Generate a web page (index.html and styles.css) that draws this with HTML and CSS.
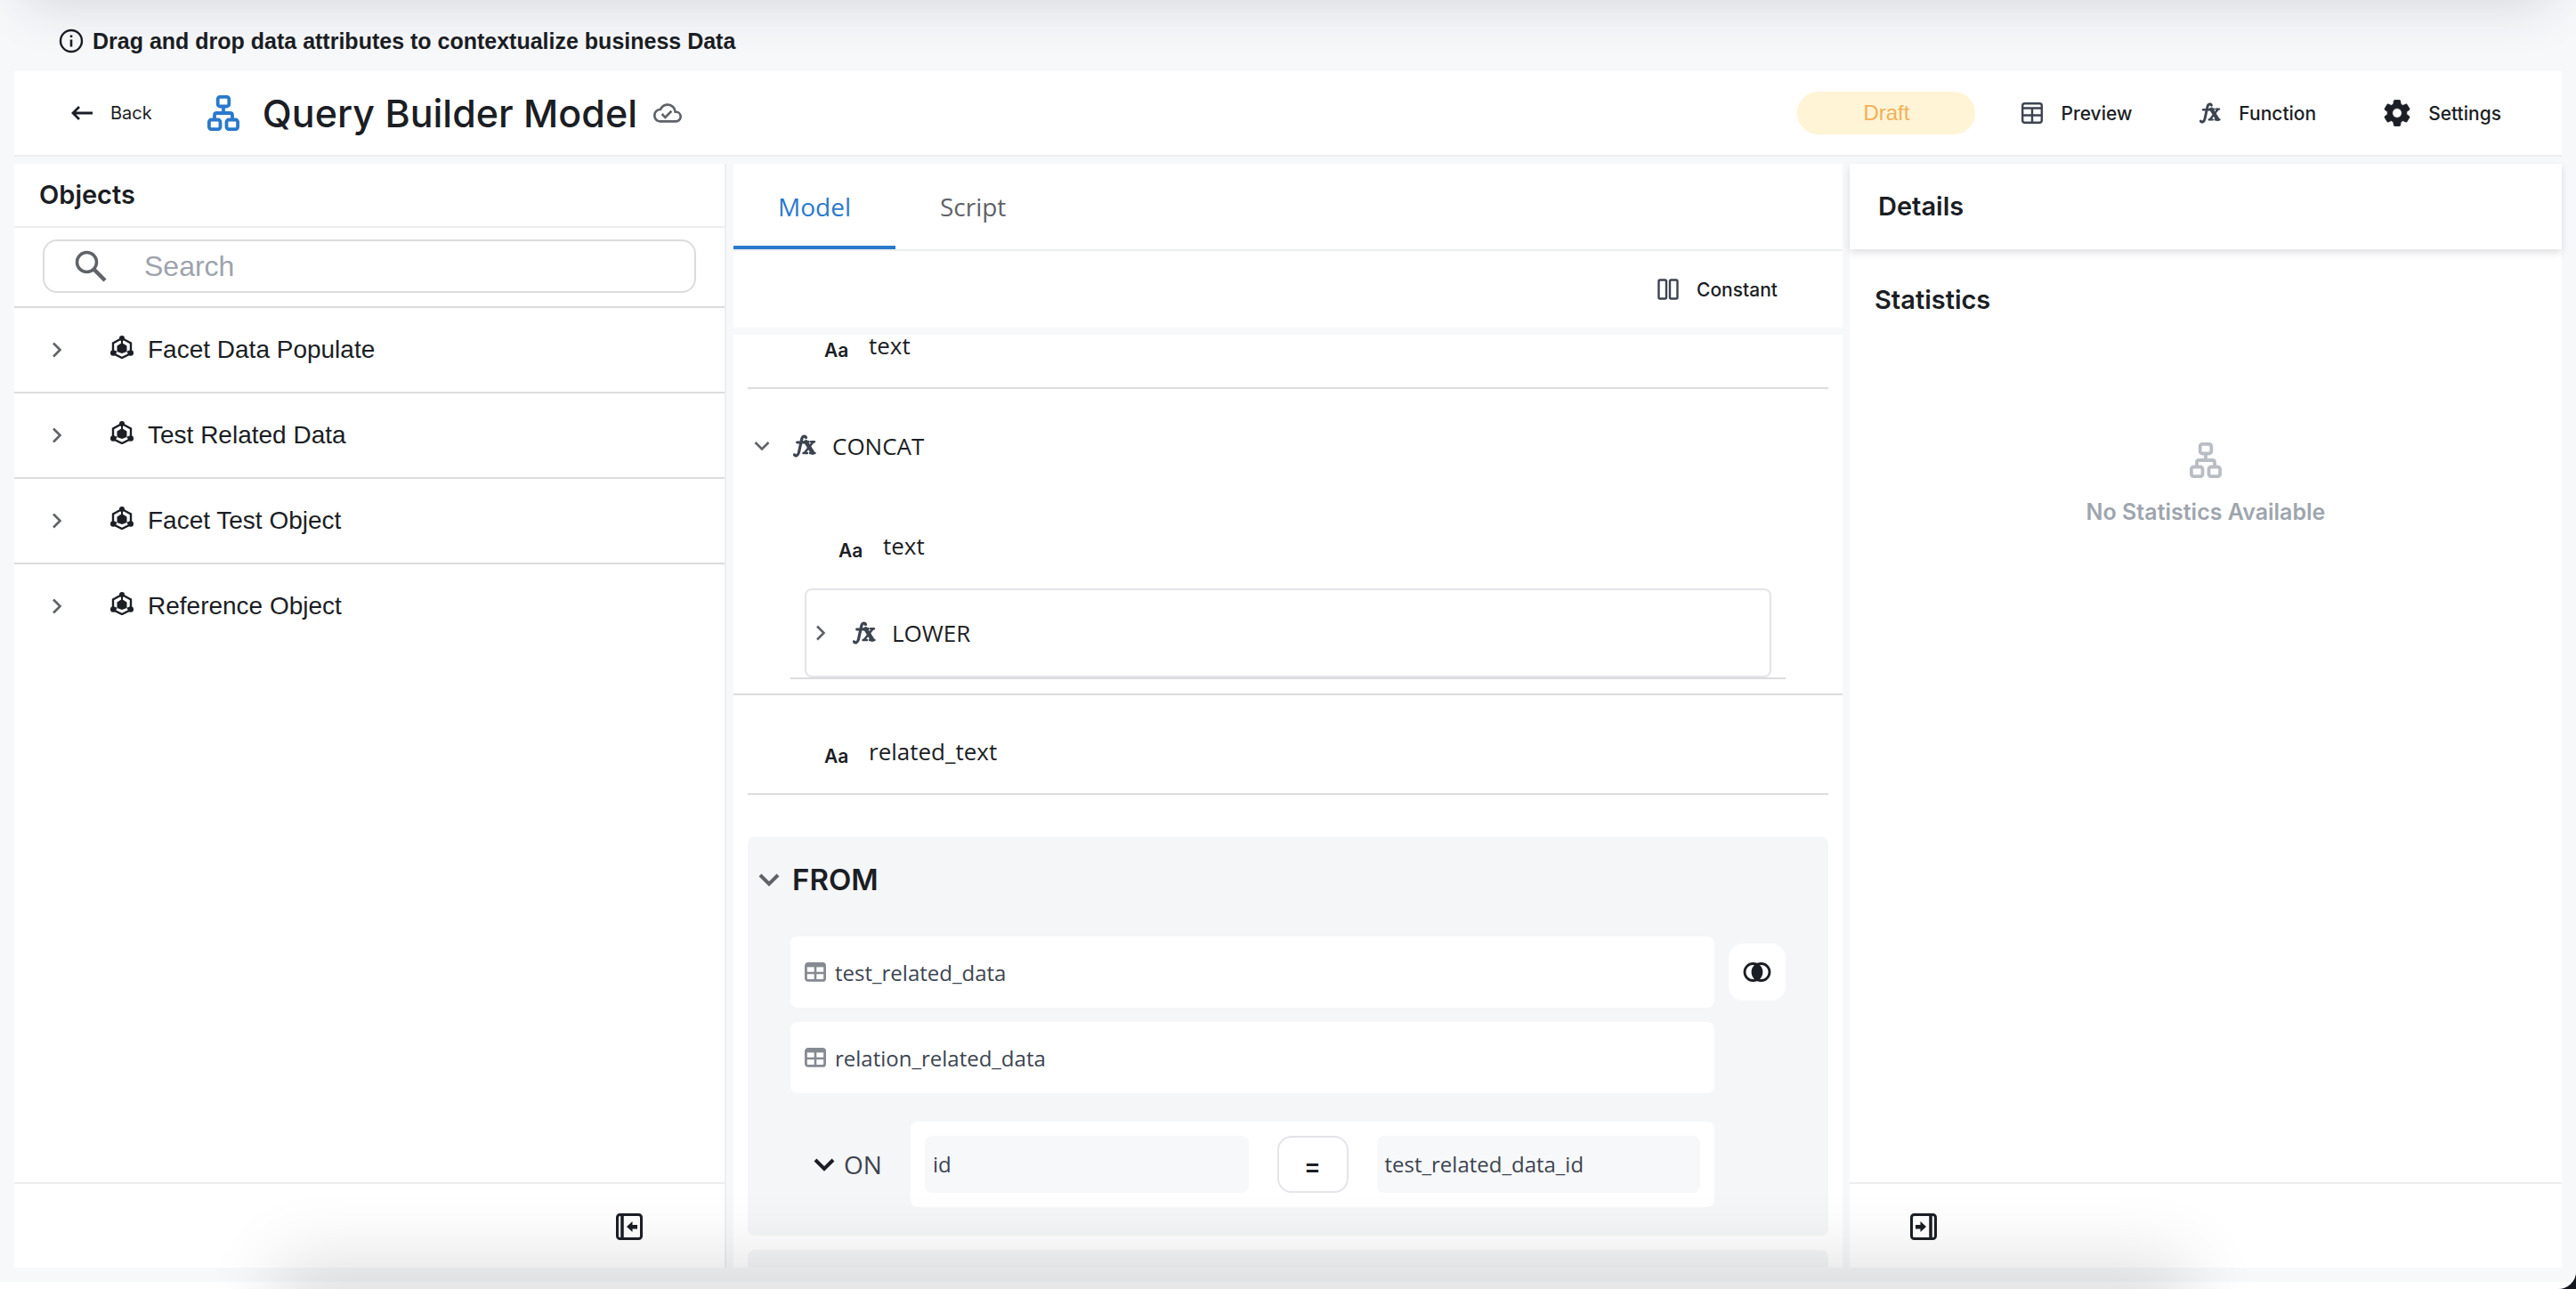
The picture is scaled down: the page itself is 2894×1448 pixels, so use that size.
FILE: index.html
```
<!DOCTYPE html>
<html lang="en">
<head>
    <meta charset="UTF-8">
    <meta name="viewport" content="width=device-width, initial-scale=1.0">
    <title>Query Builder Model</title>
    <link rel="stylesheet" href="styles.css">
</head>
<body>
    <!-- Icon sprite -->
    <svg class="sprite" aria-hidden="true">
        <symbol id="icon-info" viewBox="0 0 28 28">
            <circle cx="14" cy="14" r="12" fill="none" stroke="currentColor" stroke-width="2.4"/>
            <path d="M14 12.5v8M14 7.5v2.6" fill="none" stroke="currentColor" stroke-width="2.6"/>
        </symbol>
        <symbol id="icon-back" viewBox="0 0 24 16">
            <path d="M24 8H2M9 1L2 8l7 7" fill="none" stroke="currentColor" stroke-width="2.8"/>
        </symbol>
        <symbol id="icon-model" viewBox="0 0 36 40">
            <g fill="none" stroke="currentColor" stroke-width="3.8">
                <rect x="11.7" y="1.9" width="12.6" height="10.6" rx="2.5"/>
                <rect x="1.9" y="27.5" width="12.6" height="10.6" rx="2.5"/>
                <rect x="21.5" y="27.5" width="12.6" height="10.6" rx="2.5"/>
                <path d="M18 12v8M8 27v-4.500q0-2.500 2.500-2.500h15q2.500 0 2.500 2.500V27"/>
            </g>
        </symbol>
        <symbol id="icon-cloud" viewBox="0 0 24 24">
            <path d="M19.350 10.040A7.490 7.490 0 0 0 12 4C9.110 4 6.600 5.640 5.350 8.040A5.994 5.994 0 0 0 0 14c0 3.310 2.690 6 6 6h13c2.760 0 5-2.240 5-5 0-2.640-2.050-4.780-4.650-4.960zM19 18H6c-2.210 0-4-1.790-4-4 0-2.050 1.530-3.760 3.560-3.970l1.070-.11.5-.95A5.469 5.469 0 0 1 12 6c2.620 0 4.880 1.860 5.390 4.430l.3 1.500 1.530.11A2.980 2.980 0 0 1 22 15c0 1.650-1.350 3-3 3zm-9-3.820l-2.090-2.090L6.500 13.500 10 17l6.010-6.010-1.410-1.410z" fill="currentColor"/>
        </symbol>
        <symbol id="icon-preview" viewBox="0 0 24 24">
            <g fill="none" stroke="currentColor" stroke-width="2.4">
                <rect x="1.2" y="1.2" width="21.6" height="21.6" rx="2.5"/>
                <path d="M1 6.500h22M1 14.500h22M12 6.500v16.500" />
            </g>
        </symbol>
        <symbol id="icon-function" viewBox="0 0 26 26">
            <g fill="none" stroke="currentColor" stroke-linecap="round">
                <path d="M14.500 3.500c-.5-2-3.800-2.200-4.700 1.500L6.500 20c-.8 4-4 5-5 2.800" stroke-width="3.2"/>
                <path d="M4.500 9h8.500" stroke-width="2.8"/>
                <path d="M14.500 8.500l7.500 12" stroke-width="4.6"/>
                <path d="M22.500 8.500l-9.500 12" stroke-width="2.6"/>
                <path d="M12.500 8.200h5M20 8.200h4M11.500 21h4.500M19 21h5.500" stroke-width="2.4"/>
            </g>
        </symbol>
        <symbol id="icon-gear" viewBox="2 2 20 20">
            <path d="M19.140 12.940c.04-.3.06-.61.06-.94 0-.32-.02-.64-.07-.94l2.030-1.580a.49.49 0 0 0 .12-.61l-1.920-3.320a.488.488 0 0 0-.59-.22l-2.390.96c-.5-.38-1.030-.7-1.620-.94l-.36-2.540a.484.484 0 0 0-.48-.41h-3.840c-.24 0-.43.17-.47.41l-.36 2.540c-.59.24-1.130.57-1.620.94l-2.390-.96c-.22-.08-.47 0-.59.22L2.740 8.870c-.12.21-.08.47.12.61l2.030 1.580c-.05.3-.09.63-.09.94s.02.64.07.94l-2.030 1.580a.49.49 0 0 0-.12.61l1.920 3.320c.12.22.37.29.59.22l2.390-.96c.5.38 1.030.7 1.620.94l.36 2.540c.05.24.24.41.48.41h3.840c.24 0 .44-.17.47-.41l.36-2.540c.59-.24 1.130-.56 1.620-.94l2.390.96c.22.08.47 0 .59-.22l1.920-3.320c.12-.22.07-.47-.12-.61l-2.010-1.580zM12 15.600c-1.980 0-3.600-1.620-3.600-3.600s1.620-3.600 3.600-3.600 3.600 1.620 3.600 3.600-1.620 3.600-3.600 3.600z" fill="currentColor" stroke="currentColor" stroke-width=".6"/>
        </symbol>
        <symbol id="icon-search" viewBox="0 0 36 36">
            <circle cx="13.500" cy="13.500" r="11" fill="none" stroke="currentColor" stroke-width="3.500"/>
            <path d="M21.500 21.500l12.500 12.500" fill="none" stroke="currentColor" stroke-width="4.500"/>
        </symbol>
        <symbol id="icon-right" viewBox="0 0 12 18">
            <path d="M2 1.500l7.500 7.500L2 16.500" fill="none" stroke="currentColor" stroke-width="2.6"/>
        </symbol>
        <symbol id="icon-down" viewBox="0 0 24 16">
            <path d="M2 3l10 10L22 3" fill="none" stroke="currentColor" stroke-width="4"/>
        </symbol>
        <symbol id="icon-down-thin" viewBox="0 0 18 12">
            <path d="M1.500 2L9 9.500 16.500 2" fill="none" stroke="currentColor" stroke-width="2.6"/>
        </symbol>
        <symbol id="icon-object" viewBox="0 0 26 26">
            <path d="M13 3L3 8.500v11.500l10 5 10-5V8.500z" fill="none" stroke="currentColor" stroke-width="2.4"/>
            <path d="M13 8l5.500 3.500v6.500L13 20l-5.500-2v-6.500z" fill="currentColor"/>
            <path d="M13 3v8M7 18l-4 2M19 18l4 2" stroke="currentColor" stroke-width="2"/>
            <circle cx="13" cy="3" r="3" fill="currentColor"/>
            <circle cx="3.200" cy="19.500" r="3.200" fill="currentColor"/>
            <circle cx="22.800" cy="19.500" r="3.200" fill="currentColor"/>
        </symbol>
        <symbol id="icon-collapse" viewBox="0 0 30 30">
            <rect x="1.500" y="1.500" width="27" height="27" rx="3" fill="none" stroke="currentColor" stroke-width="3"/>
            <path d="M7 1v28" stroke="currentColor" stroke-width="3.500"/>
            <path d="M12 15l6.500-6v4H24v4.500h-5.500V21z" fill="currentColor"/>
        </symbol>
        <symbol id="icon-expand" viewBox="0 0 30 30">
            <rect x="1.500" y="1.500" width="27" height="27" rx="3" fill="none" stroke="currentColor" stroke-width="3"/>
            <path d="M23 1v28" stroke="currentColor" stroke-width="3.500"/>
            <path d="M18 15l-6.500-6v4H6v4.500h5.500V21z" fill="currentColor"/>
        </symbol>
        <symbol id="icon-constant" viewBox="0 0 24 24">
            <g fill="none" stroke="currentColor" stroke-width="2.4">
                <rect x="1.500" y="1.500" width="8.500" height="21" rx="1.500"/>
                <rect x="14" y="1.500" width="8.500" height="21" rx="1.500"/>
            </g>
        </symbol>
        <symbol id="icon-table" viewBox="0 0 24 22">
            <rect x="1.400" y="1.400" width="21.200" height="19" rx="2.500" fill="none" stroke="currentColor" stroke-width="2.8"/>
            <path d="M1 3.200h22" stroke="currentColor" stroke-width="4.400"/>
            <path d="M1 12h22M12 3v17" stroke="currentColor" stroke-width="2.6"/>
        </symbol>
        <symbol id="icon-join" viewBox="0 0 32 24">
            <path d="M16 3.500a10 10 0 0 1 0 17 10 10 0 0 1 0-17z" fill="currentColor"/>
            <circle cx="11.500" cy="12" r="9.500" fill="none" stroke="currentColor" stroke-width="2.8"/>
            <circle cx="20.500" cy="12" r="9.500" fill="none" stroke="currentColor" stroke-width="2.8"/>
        </symbol>
    </svg>

    <div class="window">
        <div class="app">
            <div class="notice">
                <svg class="notice-icon"><use href="#icon-info"/></svg>
                Drag and drop data attributes to contextualize business Data
            </div>

            <header class="header">
                <button class="btn back"><svg class="i-back"><use href="#icon-back"/></svg>Back</button>
                <svg class="i-model"><use href="#icon-model"/></svg>
                <h1>Query Builder Model</h1>
                <svg class="i-cloud"><use href="#icon-cloud"/></svg>
                <div class="actions">
                    <span class="badge">Draft</span>
                    <button class="btn"><svg class="i-24"><use href="#icon-preview"/></svg>Preview</button>
                    <button class="btn"><svg class="i-24"><use href="#icon-function"/></svg>Function</button>
                    <button class="btn settings"><svg class="i-30"><use href="#icon-gear"/></svg>Settings</button>
                </div>
            </header>

            <main class="columns">
                <!-- Objects -->
                <aside class="panel objects">
                    <h2>Objects</h2>
                    <div class="search-wrap">
                        <label class="search">
                            <svg class="i-search"><use href="#icon-search"/></svg>
                            <input type="text" placeholder="Search" aria-label="Search">
                        </label>
                    </div>
                    <ul class="object-list">
                        <li><svg class="i-right"><use href="#icon-right"/></svg><svg class="i-object"><use href="#icon-object"/></svg>Facet Data Populate</li>
                        <li><svg class="i-right"><use href="#icon-right"/></svg><svg class="i-object"><use href="#icon-object"/></svg>Test Related Data</li>
                        <li><svg class="i-right"><use href="#icon-right"/></svg><svg class="i-object"><use href="#icon-object"/></svg>Facet Test Object</li>
                        <li><svg class="i-right"><use href="#icon-right"/></svg><svg class="i-object"><use href="#icon-object"/></svg>Reference Object</li>
                    </ul>
                    <div class="panel-footer end">
                        <button class="toggle" aria-label="Collapse objects"><svg class="i-30"><use href="#icon-collapse"/></svg></button>
                    </div>
                </aside>

                <!-- Model -->
                <section class="center">
                    <div class="panel">
                        <nav class="tabs">
                            <button class="tab active">Model</button>
                            <button class="tab">Script</button>
                        </nav>
                        <div class="toolbar">
                            <button class="btn"><svg class="i-24"><use href="#icon-constant"/></svg>Constant</button>
                        </div>
                    </div>

                    <div class="panel model">
                        <div class="model-content">
                            <div class="attr"><span class="type">Aa</span>text</div>

                            <div class="fn">
                                <div class="fn-head">
                                    <svg class="i-down-thin"><use href="#icon-down-thin"/></svg>
                                    <svg class="i-fx"><use href="#icon-function"/></svg>CONCAT
                                </div>
                                <div class="fn-body">
                                    <div class="arg"><span class="type">Aa</span>text</div>
                                    <div class="fn-box">
                                        <svg class="i-right"><use href="#icon-right"/></svg>
                                        <svg class="i-fx"><use href="#icon-function"/></svg>LOWER
                                    </div>
                                </div>
                            </div>

                            <div class="attr"><span class="type">Aa</span>related_text</div>

                            <section class="from">
                                <h3><svg class="i-down"><use href="#icon-down"/></svg>FROM</h3>
                                <div class="sources">
                                    <div class="source"><svg class="i-table"><use href="#icon-table"/></svg>test_related_data</div>
                                    <button class="join" aria-label="Join type"><svg class="i-join"><use href="#icon-join"/></svg></button>
                                    <div class="source"><svg class="i-table"><use href="#icon-table"/></svg>relation_related_data</div>
                                    <div class="on">
                                        <div class="on-label"><svg class="i-down"><use href="#icon-down"/></svg>ON</div>
                                        <div class="condition">
                                            <div class="field">id</div>
                                            <button class="operator">=</button>
                                            <div class="field">test_related_data_id</div>
                                        </div>
                                    </div>
                                </div>
                            </section>
                            <section class="from next"></section>
                        </div>
                    </div>
                </section>

                <!-- Details -->
                <aside class="panel details">
                    <h2>Details</h2>
                    <div class="stats">
                        <h3>Statistics</h3>
                        <div class="empty">
                            <svg class="i-model"><use href="#icon-model"/></svg>
                            <p>No Statistics Available</p>
                        </div>
                    </div>
                    <div class="panel-footer">
                        <button class="toggle" aria-label="Collapse details"><svg class="i-30"><use href="#icon-expand"/></svg></button>
                    </div>
                </aside>
            </main>
        </div>
        <div class="shade-top"></div>
        <div class="shade-bottom"></div>
    </div>
</body>
</html>
```

FILE: styles.css
```
* {
    box-sizing: border-box;
}

body {
    margin: 0;
    height: 100vh;
    background: #14171d;
    color: #1b1e24;
    font-family: "Open Sans", "Noto Sans", sans-serif;
    font-size: 26px;
    overflow: hidden;
}

h1, h2, h3, p, ul {
    margin: 0;
    padding: 0;
}

svg {
    flex: none;
    display: block;
}

button {
    font: inherit;
    color: inherit;
    background: none;
    border: none;
    padding: 0;
    cursor: pointer;
}

.sprite {
    position: absolute;
    width: 0;
    height: 0;
}

.window {
    position: relative;
    height: 100%;
    padding-bottom: 8px;
    background: #fff;
    border-radius: 0 0 20px 0;
    overflow: hidden;
}

.app {
    display: flex;
    flex-direction: column;
    height: 100%;
    padding: 0 16px 16px;
    background: #f7f8fa;
}

/* Shadows of the windows above and below */
.shade-top,
.shade-bottom {
    position: absolute;
    height: 200px;
    pointer-events: none;
}

.shade-top {
    bottom: 100%;
    left: 32px;
    right: 32px;
    box-shadow: 0 0 56px 4px rgba(40, 40, 60, 0.16);
}

.shade-bottom {
    top: 100%;
    left: 310px;
    right: 434px;
    box-shadow: 0 -34px 80px rgba(0, 0, 0, 0.12);
}

/* Notice */
.notice {
    display: flex;
    align-items: center;
    gap: 10px;
    height: 80px;
    padding: 12px 50px 0;
    font: bold 25px "Liberation Sans", sans-serif;
}

.notice-icon {
    width: 28px;
    height: 28px;
}

/* Header */
.header {
    display: flex;
    align-items: center;
    height: 96px;
    margin-bottom: 8px;
    padding: 0 68px 0 64px;
    background: #fff;
    border-bottom: 2px solid #edeef0;
}

.header h1 {
    margin: 0 18px 0 26px;
    font: 500 43px "Inter", sans-serif;
}

.btn {
    display: flex;
    align-items: center;
    gap: 20px;
    font: 500 21px "Inter", sans-serif;
}

.back {
    margin-right: 62px;
    font-weight: 400;
    font-size: 20px;
}

.header .i-model {
    color: #2979cc;
}

.actions {
    display: flex;
    align-items: center;
    gap: 76px;
    margin-left: auto;
}

.badge {
    width: 200px;
    margin-right: -24px;
    border-radius: 24px;
    background: #fff4d6;
    color: #f2b056;
    font: 24px/48px "Liberation Sans", sans-serif;
    text-align: center;
}

.i-back { width: 24px; height: 16px; }
.i-model { width: 36px; height: 40px; }
.i-cloud { width: 32px; height: 32px; color: #5f6368; }
.i-24 { width: 24px; height: 24px; color: #3c4450; }
.i-30 { width: 30px; height: 30px; }
.i-search { width: 36px; height: 36px; color: #5f6368; }
.i-right { width: 12px; height: 18px; color: #5f6368; }
.i-object { width: 26px; height: 26px; }
.i-down { width: 24px; height: 16px; }
.i-down-thin { width: 18px; height: 12px; color: #5f6368; }
.i-fx { width: 26px; height: 26px; color: #3c4450; }
.i-table { width: 24px; height: 22px; color: #868a91; }
.i-join { width: 32px; height: 24px; }

/* Columns */
.columns {
    display: grid;
    grid-template-columns: 800fr 1246fr 800fr;
    gap: 8px;
    flex: 1;
    min-height: 0;
}

.panel {
    background: #fff;
}

.objects,
.details {
    display: flex;
    flex-direction: column;
}

.panel h2 {
    font: 600 29px "Inter", sans-serif;
}

.panel.objects {
    border-right: 2px solid #edeef0;
}

.panel.objects h2 {
    padding: 0 28px;
    line-height: 70px;
    border-bottom: 2px solid #edeef0;
}

.search-wrap {
    padding: 13px 32px 15px;
}

.search {
    display: flex;
    align-items: center;
    gap: 42px;
    height: 60px;
    padding: 0 34px;
    border: 2px solid #dcdcde;
    border-radius: 16px;
}

.search input {
    flex: 1;
    min-width: 0;
    border: none;
    outline: none;
    padding: 0;
    font: 32px "Liberation Sans", sans-serif;
}

.search input::placeholder {
    color: #9ea3ad;
}

.object-list {
    flex: 1;
    list-style: none;
    font: 28px "Liberation Sans", sans-serif;
}

.object-list li {
    display: flex;
    align-items: center;
    height: 96px;
    padding-left: 42px;
    border-top: 2px solid #dcdcde;
}

.object-list .i-object {
    margin: 0 16px 6px 54px;
}

.panel-footer {
    display: flex;
    align-items: center;
    height: 96px;
    padding: 2px 68px 0;
    border-top: 2px solid #eeeeef;
}

.panel-footer.end {
    justify-content: flex-end;
    padding-right: 92px;
}

/* Center */
.center {
    display: flex;
    flex-direction: column;
    gap: 8px;
    min-height: 0;
}

.tabs {
    display: flex;
    height: 98px;
    border-bottom: 2px solid #edeef0;
}

.tab {
    padding: 4px 50px 0;
    border-bottom: 4px solid transparent;
    color: #5f6368;
    font-size: 28px;
}

.tab.active {
    color: #2979cc;
    border-color: #2979cc;
}

.toolbar {
    display: flex;
    justify-content: flex-end;
    height: 86px;
    padding-right: 73px;
}

.model {
    flex: 1;
    min-height: 0;
    overflow: hidden;
}

/* list is scrolled past its first rows */
.model-content {
    margin-top: -51px;
}

.attr {
    display: flex;
    align-items: center;
    height: 112px;
    margin: 0 16px;
    padding: 16px 0 0 86px;
    border-bottom: 2px solid #dcdcde;
    line-height: 24px;
}

.type {
    width: 50px;
    padding-top: 10px;
    font: 600 21px "Inter", sans-serif;
}

.fn {
    padding-bottom: 16px;
    border-bottom: 2px solid #dcdcde;
}

.fn-head {
    display: flex;
    align-items: center;
    height: 128px;
    padding-left: 23px;
}

.i-fx {
    margin: 0 18px 0 26px;
}

.fn-body {
    margin: 0 64px;
    border-bottom: 2px solid #dcdcde;
}

.arg {
    display: flex;
    align-items: center;
    height: 96px;
    padding-left: 54px;
}

.fn-box {
    display: flex;
    align-items: center;
    height: 100px;
    margin: 0 16px;
    padding-left: 10px;
    border: 2px solid #e4e4ea;
    border-radius: 8px;
}

.fn-box .i-fx {
    margin-left: 30px;
}

/* From */
.from {
    margin: 47px 16px 16px;
    padding: 0 48px 32px;
    border-radius: 8px;
    background: #f5f6f8;
}

.from h3 {
    display: flex;
    align-items: center;
    gap: 14px;
    height: 112px;
    margin-left: -36px;
    padding-bottom: 16px;
    font: 600 33px "Inter", sans-serif;
}

.from h3 .i-down {
    color: #5f6368;
}

.from.next {
    height: 100px;
    margin-top: 0;
}

.sources {
    display: grid;
    grid-template-columns: 1fr 64px;
    gap: 16px;
    align-items: center;
    color: #3c4450;
    font-size: 24px;
}

.source {
    display: flex;
    align-items: center;
    gap: 10px;
    height: 80px;
    padding-left: 16px;
    border-radius: 8px;
    background: #fff;
}

.join {
    display: grid;
    place-items: center;
    height: 64px;
    border-radius: 16px;
    background: #fff;
    color: #1b1e24;
}

.on {
    grid-column: 1;
    display: flex;
    align-items: center;
    margin-top: 16px;
}

.on-label {
    display: flex;
    align-items: center;
    gap: 10px;
    width: 135px;
    padding-left: 26px;
    font-size: 28px;
}

.on-label .i-down {
    color: #1b1e24;
}

.condition {
    display: flex;
    flex: 1;
    gap: 32px;
    padding: 16px;
    border-radius: 8px;
    background: #fff;
}

.field {
    flex: 1;
    padding-left: 9px;
    border-radius: 8px;
    background: #f7f8fa;
    line-height: 64px;
}

.operator {
    width: 80px;
    height: 64px;
    padding-top: 4px;
    border: 2px solid #e4e4ea;
    border-radius: 16px;
    color: #1b1e24;
    font: 600 28px "Inter", sans-serif;
}

/* Details */
.panel.details h2 {
    padding: 0 32px;
    line-height: 96px;
    box-shadow: 0 4px 8px rgba(30, 35, 50, 0.14);
}

.stats {
    flex: 1;
    padding: 40px 28px;
}

.stats h3 {
    font: 600 29px/34px "Inter", sans-serif;
}

.empty {
    display: flex;
    flex-direction: column;
    align-items: center;
    gap: 22px;
    margin-top: 143px;
    color: #b9bdc4;
}

.empty p {
    color: #9ea5ae;
    font: 600 25px/32px "Inter", sans-serif;
}
```
